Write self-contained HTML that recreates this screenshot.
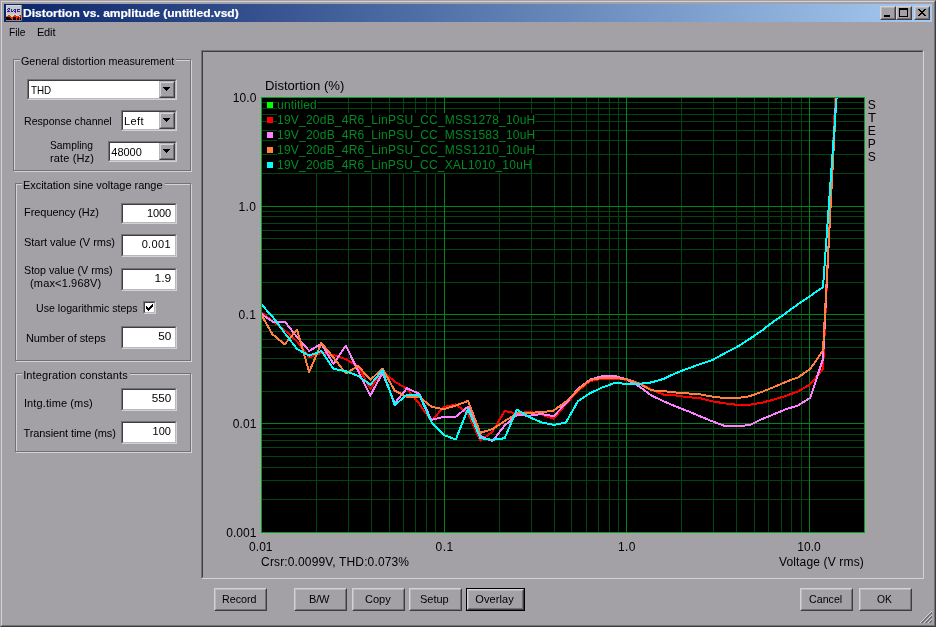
<!DOCTYPE html>
<html><head><meta charset="utf-8"><title>Distortion vs. amplitude</title><style>

html,body{margin:0;padding:0}
body{width:936px;height:627px;background:#a3a1a6;position:relative;overflow:hidden;font-family:"Liberation Sans",sans-serif;font-size:11px;color:#000}
div,span,svg{position:absolute}
.t{white-space:nowrap;display:block}
.sunk{box-sizing:border-box;border:1px solid;border-color:#737177 #d3d2d6 #d3d2d6 #737177;background:#fff}
.sunk2{left:0;top:0;right:0;bottom:0;box-sizing:border-box;border:1px solid;border-color:#3e3e40 #b9b7bc #b9b7bc #3e3e40}
.btn{box-sizing:border-box;border:1px solid;border-color:#d3d2d6 #3e3e40 #3e3e40 #d3d2d6;background:#a3a1a6}
.cbtn{box-sizing:border-box;border:1px solid;border-color:#b9b7bc #3e3e40 #3e3e40 #b9b7bc;background:#a3a1a6}
.cbtn2{left:0;top:0;right:0;bottom:0;box-sizing:border-box;border:1px solid;border-color:#d3d2d6 #737177 #737177 #d3d2d6}
.btn2{left:0;top:0;right:0;bottom:0;box-sizing:border-box;border:1px solid;border-color:#b9b7bc #737177 #737177 #b9b7bc}

</style></head><body>
<div style="left:0;top:0;width:936px;height:627px;box-sizing:border-box;border:1px solid;border-color:#a3a1a6 #3e3e40 #3e3e40 #a3a1a6"></div>
<div style="left:1px;top:1px;width:934px;height:625px;box-sizing:border-box;border:1px solid;border-color:#d3d2d6 #737177 #737177 #d3d2d6"></div>
<div style="left:4px;top:4px;width:928px;height:18px;background:linear-gradient(to right,#0a246a 0%,#a6caf0 100%)"></div>
<svg style="left:6px;top:5px" width="16" height="16" shape-rendering="crispEdges"><rect x="0" y="0" width="15" height="1" fill="#d8d8d4"/><rect x="15" y="0" width="1" height="1" fill="#8c8a84"/><rect x="0" y="1" width="1" height="1" fill="#d8d8d4"/><rect x="1" y="1" width="14" height="1" fill="#c6c6c6"/><rect x="15" y="1" width="1" height="1" fill="#8c8a84"/><rect x="0" y="2" width="1" height="1" fill="#d8d8d4"/><rect x="1" y="2" width="14" height="1" fill="#c6c6c6"/><rect x="15" y="2" width="1" height="1" fill="#8c8a84"/><rect x="0" y="3" width="1" height="1" fill="#d8d8d4"/><rect x="1" y="3" width="1" height="1" fill="#c6c6c6"/><rect x="2" y="3" width="2" height="1" fill="#26269c"/><rect x="4" y="3" width="11" height="1" fill="#c6c6c6"/><rect x="15" y="3" width="1" height="1" fill="#8c8a84"/><rect x="0" y="4" width="1" height="1" fill="#d8d8d4"/><rect x="1" y="4" width="1" height="1" fill="#26269c"/><rect x="2" y="4" width="1" height="1" fill="#c6c6c6"/><rect x="3" y="4" width="1" height="1" fill="#26269c"/><rect x="4" y="4" width="1" height="1" fill="#c6c6c6"/><rect x="5" y="4" width="1" height="1" fill="#26269c"/><rect x="6" y="4" width="2" height="1" fill="#c6c6c6"/><rect x="8" y="4" width="2" height="1" fill="#26269c"/><rect x="10" y="4" width="1" height="1" fill="#c6c6c6"/><rect x="11" y="4" width="3" height="1" fill="#26269c"/><rect x="14" y="4" width="1" height="1" fill="#c6c6c6"/><rect x="15" y="4" width="1" height="1" fill="#8c8a84"/><rect x="0" y="5" width="1" height="1" fill="#d8d8d4"/><rect x="1" y="5" width="1" height="1" fill="#c6c6c6"/><rect x="2" y="5" width="1" height="1" fill="#26269c"/><rect x="3" y="5" width="2" height="1" fill="#c6c6c6"/><rect x="5" y="5" width="1" height="1" fill="#26269c"/><rect x="6" y="5" width="1" height="1" fill="#c6c6c6"/><rect x="7" y="5" width="1" height="1" fill="#26269c"/><rect x="8" y="5" width="1" height="1" fill="#c6c6c6"/><rect x="9" y="5" width="1" height="1" fill="#26269c"/><rect x="10" y="5" width="1" height="1" fill="#c6c6c6"/><rect x="11" y="5" width="1" height="1" fill="#26269c"/><rect x="12" y="5" width="3" height="1" fill="#c6c6c6"/><rect x="15" y="5" width="1" height="1" fill="#8c8a84"/><rect x="0" y="6" width="1" height="1" fill="#d8d8d4"/><rect x="1" y="6" width="3" height="1" fill="#26269c"/><rect x="4" y="6" width="1" height="1" fill="#c6c6c6"/><rect x="5" y="6" width="2" height="1" fill="#26269c"/><rect x="7" y="6" width="1" height="1" fill="#c6c6c6"/><rect x="8" y="6" width="2" height="1" fill="#26269c"/><rect x="10" y="6" width="1" height="1" fill="#c6c6c6"/><rect x="11" y="6" width="3" height="1" fill="#26269c"/><rect x="14" y="6" width="1" height="1" fill="#c6c6c6"/><rect x="15" y="6" width="1" height="1" fill="#8c8a84"/><rect x="0" y="7" width="1" height="1" fill="#d8d8d4"/><rect x="1" y="7" width="8" height="1" fill="#c6c6c6"/><rect x="9" y="7" width="1" height="1" fill="#26269c"/><rect x="10" y="7" width="5" height="1" fill="#c6c6c6"/><rect x="15" y="7" width="1" height="1" fill="#8c8a84"/><rect x="0" y="8" width="1" height="1" fill="#d8d8d4"/><rect x="1" y="8" width="14" height="1" fill="#c6c6c6"/><rect x="15" y="8" width="1" height="1" fill="#8c8a84"/><rect x="0" y="9" width="1" height="1" fill="#d8d8d4"/><rect x="1" y="9" width="3" height="1" fill="#c4dce4"/><rect x="4" y="9" width="3" height="1" fill="#c6c6c6"/><rect x="7" y="9" width="4" height="1" fill="#c4dce4"/><rect x="11" y="9" width="3" height="1" fill="#c6c6c6"/><rect x="14" y="9" width="1" height="1" fill="#c4dce4"/><rect x="15" y="9" width="1" height="1" fill="#8c8a84"/><rect x="0" y="10" width="1" height="1" fill="#d8d8d4"/><rect x="1" y="10" width="1" height="1" fill="#c4dce4"/><rect x="2" y="10" width="2" height="1" fill="#ff2a00"/><rect x="4" y="10" width="4" height="1" fill="#c4dce4"/><rect x="8" y="10" width="2" height="1" fill="#ff2a00"/><rect x="10" y="10" width="3" height="1" fill="#c4dce4"/><rect x="13" y="10" width="2" height="1" fill="#ff2a00"/><rect x="15" y="10" width="1" height="1" fill="#8c8a84"/><rect x="0" y="11" width="1" height="1" fill="#ff7a30"/><rect x="1" y="11" width="4" height="1" fill="#ff2a00"/><rect x="5" y="11" width="2" height="1" fill="#c4dce4"/><rect x="7" y="11" width="6" height="1" fill="#ff2a00"/><rect x="13" y="11" width="1" height="1" fill="#c4dce4"/><rect x="14" y="11" width="1" height="1" fill="#ff2a00"/><rect x="15" y="11" width="1" height="1" fill="#8c8a84"/><rect x="0" y="12" width="4" height="1" fill="#000000"/><rect x="4" y="12" width="3" height="1" fill="#ff2a00"/><rect x="7" y="12" width="3" height="1" fill="#000000"/><rect x="10" y="12" width="2" height="1" fill="#ff2a00"/><rect x="12" y="12" width="1" height="1" fill="#000000"/><rect x="13" y="12" width="2" height="1" fill="#ff2a00"/><rect x="15" y="12" width="1" height="1" fill="#8c8a84"/><rect x="0" y="13" width="5" height="1" fill="#000000"/><rect x="5" y="13" width="2" height="1" fill="#ff2a00"/><rect x="7" y="13" width="3" height="1" fill="#000000"/><rect x="10" y="13" width="1" height="1" fill="#ff2a00"/><rect x="11" y="13" width="2" height="1" fill="#000000"/><rect x="13" y="13" width="1" height="1" fill="#ff2a00"/><rect x="14" y="13" width="1" height="1" fill="#000000"/><rect x="15" y="13" width="1" height="1" fill="#8c8a84"/><rect x="0" y="14" width="6" height="1" fill="#000000"/><rect x="6" y="14" width="1" height="1" fill="#ff2a00"/><rect x="7" y="14" width="3" height="1" fill="#000000"/><rect x="10" y="14" width="1" height="1" fill="#ff2a00"/><rect x="11" y="14" width="2" height="1" fill="#000000"/><rect x="13" y="14" width="1" height="1" fill="#ff2a00"/><rect x="14" y="14" width="1" height="1" fill="#000000"/><rect x="15" y="14" width="1" height="1" fill="#8c8a84"/><rect x="0" y="15" width="15" height="1" fill="#8c887c"/><rect x="15" y="15" width="1" height="1" fill="#706c64"/></svg>
<div class="btn" style="left:880px;top:6px;width:16px;height:14px"><div class="btn2"></div>
<svg width="12" height="10" style="left:1px;top:1px" shape-rendering="crispEdges"><rect x="2" y="7" width="6" height="2" fill="#000"/></svg>
</div>
<div class="btn" style="left:896px;top:6px;width:16px;height:14px"><div class="btn2"></div>
<svg width="12" height="10" style="left:1px;top:1px" shape-rendering="crispEdges"><path d="M1 0h9v9h-9zM2 2v6h7v-6z" fill="#000" fill-rule="evenodd"/></svg>
</div>
<div class="btn" style="left:914px;top:6px;width:16px;height:14px"><div class="btn2"></div>
<svg width="12" height="10" style="left:1px;top:1px" shape-rendering="crispEdges"><path d="M2 1h2v1h-2zM8 1h2v1h-2zM3 2h2v1h-2zM7 2h2v1h-2zM4 3h4v1h-4zM5 4h2v1h-2zM4 5h4v1h-4zM3 6h2v1h-2zM7 6h2v1h-2zM2 7h2v1h-2zM8 7h2v1h-2z" fill="#000"/></svg>
</div>
<div style="left:201px;top:50px;width:723px;height:529px;box-sizing:border-box;border:1px solid;border-color:#737177 #d3d2d6 #d3d2d6 #737177"></div>
<div style="left:202px;top:51px;width:721px;height:527px;box-sizing:border-box;border:1px solid;border-color:#3e3e40 #a3a1a6 #a3a1a6 #3e3e40"></div>
<div style="position:absolute;left:14px;top:60px;width:178px;height:112px;border:1px solid #d3d2d6;box-sizing:border-box"></div><div style="position:absolute;left:13px;top:59px;width:178px;height:112px;border:1px solid #737177;box-sizing:border-box"></div><div style="position:absolute;left:20px;top:58px;width:156px;height:4px;background:#a3a1a6"></div>
<div style="position:absolute;left:16px;top:184px;width:176px;height:178px;border:1px solid #d3d2d6;box-sizing:border-box"></div><div style="position:absolute;left:15px;top:183px;width:176px;height:178px;border:1px solid #737177;box-sizing:border-box"></div><div style="position:absolute;left:22px;top:182px;width:143px;height:4px;background:#a3a1a6"></div>
<div style="position:absolute;left:16px;top:374px;width:176px;height:79px;border:1px solid #d3d2d6;box-sizing:border-box"></div><div style="position:absolute;left:15px;top:373px;width:176px;height:79px;border:1px solid #737177;box-sizing:border-box"></div><div style="position:absolute;left:22px;top:372px;width:108px;height:4px;background:#a3a1a6"></div>
<div class="sunk" style="left:27px;top:79px;width:150px;height:21px"><div class="sunk2"></div><div class="cbtn" style="left:131px;top:1px;width:16px;height:17px"><div class="cbtn2"></div><svg width="7" height="4" style="position:absolute;left:3px;top:5px" shape-rendering="crispEdges"><path d="M0 0h7v1h-7zM1 1h5v1h-5zM2 2h3v1h-3zM3 3h1v1h-1z" fill="#000"/></svg></div></div>
<div class="sunk" style="left:121px;top:110px;width:56px;height:21px"><div class="sunk2"></div><div class="cbtn" style="left:37px;top:1px;width:16px;height:17px"><div class="cbtn2"></div><svg width="7" height="4" style="position:absolute;left:3px;top:5px" shape-rendering="crispEdges"><path d="M0 0h7v1h-7zM1 1h5v1h-5zM2 2h3v1h-3zM3 3h1v1h-1z" fill="#000"/></svg></div></div>
<div class="sunk" style="left:108px;top:141px;width:69px;height:21px"><div class="sunk2"></div><div class="cbtn" style="left:50px;top:1px;width:16px;height:17px"><div class="cbtn2"></div><svg width="7" height="4" style="position:absolute;left:3px;top:5px" shape-rendering="crispEdges"><path d="M0 0h7v1h-7zM1 1h5v1h-5zM2 2h3v1h-3zM3 3h1v1h-1z" fill="#000"/></svg></div></div>
<div class="sunk" style="left:121px;top:203px;width:56px;height:21px"><div class="sunk2"></div></div>
<div class="sunk" style="left:121px;top:234px;width:56px;height:23px"><div class="sunk2"></div></div>
<div class="sunk" style="left:121px;top:268px;width:56px;height:23px"><div class="sunk2"></div></div>
<div class="sunk" style="left:121px;top:326px;width:56px;height:23px"><div class="sunk2"></div></div>
<div class="sunk" style="left:121px;top:388px;width:56px;height:23px"><div class="sunk2"></div></div>
<div class="sunk" style="left:121px;top:421px;width:56px;height:23px"><div class="sunk2"></div></div>
<div class="sunk" style="left:143px;top:301px;width:13px;height:13px"><div class="sunk2"></div><svg width="7" height="7" style="left:2px;top:2px" shape-rendering="crispEdges"><path d="M0 2h1v3h-1zM1 3h1v3h-1zM2 4h1v3h-1zM3 3h1v3h-1zM4 2h1v3h-1zM5 1h1v3h-1zM6 0h1v3h-1z" fill="#000"/></svg></div>
<div class="btn" style="left:214px;top:588px;width:53px;height:23px"><div class="btn2"></div></div>
<div class="btn" style="left:294px;top:588px;width:53px;height:23px"><div class="btn2"></div></div>
<div class="btn" style="left:352px;top:588px;width:53px;height:23px"><div class="btn2"></div></div>
<div class="btn" style="left:409px;top:588px;width:53px;height:23px"><div class="btn2"></div></div>
<div style="position:absolute;left:466px;top:588px;width:59px;height:23px;background:#000"></div><div class="btn" style="left:467px;top:589px;width:57px;height:21px"><div class="btn2"></div></div>
<div class="btn" style="left:800px;top:588px;width:53px;height:23px"><div class="btn2"></div></div>
<div class="btn" style="left:859px;top:588px;width:53px;height:23px"><div class="btn2"></div></div>
<svg style="left:919px;top:610px" width="13" height="13"><g stroke-width="1"><line x1="1" y1="13" x2="13" y2="1" stroke="#d3d2d6"/><line x1="2" y1="13" x2="13" y2="2" stroke="#737177"/><line x1="3" y1="13" x2="13" y2="3" stroke="#737177"/><line x1="5" y1="13" x2="13" y2="5" stroke="#d3d2d6"/><line x1="6" y1="13" x2="13" y2="6" stroke="#737177"/><line x1="7" y1="13" x2="13" y2="7" stroke="#737177"/><line x1="9" y1="13" x2="13" y2="9" stroke="#d3d2d6"/><line x1="10" y1="13" x2="13" y2="10" stroke="#737177"/><line x1="11" y1="13" x2="13" y2="11" stroke="#737177"/></g></svg>
<svg id="plot" width="604" height="436" viewBox="261 97 604 436" shape-rendering="crispEdges" style="position:absolute;left:261px;top:97px">
<rect x="261" y="97" width="604" height="436" fill="#000"/>
<rect x="316" y="97" width="1" height="436" fill="#004611"/>
<rect x="348" y="97" width="1" height="436" fill="#004611"/>
<rect x="371" y="97" width="1" height="436" fill="#004611"/>
<rect x="389" y="97" width="1" height="436" fill="#004611"/>
<rect x="403" y="97" width="1" height="436" fill="#004611"/>
<rect x="415" y="97" width="1" height="436" fill="#004611"/>
<rect x="426" y="97" width="1" height="436" fill="#004611"/>
<rect x="435" y="97" width="1" height="436" fill="#004611"/>
<rect x="499" y="97" width="1" height="436" fill="#004611"/>
<rect x="531" y="97" width="1" height="436" fill="#004611"/>
<rect x="554" y="97" width="1" height="436" fill="#004611"/>
<rect x="571" y="97" width="1" height="436" fill="#004611"/>
<rect x="586" y="97" width="1" height="436" fill="#004611"/>
<rect x="598" y="97" width="1" height="436" fill="#004611"/>
<rect x="609" y="97" width="1" height="436" fill="#004611"/>
<rect x="618" y="97" width="1" height="436" fill="#004611"/>
<rect x="681" y="97" width="1" height="436" fill="#004611"/>
<rect x="713" y="97" width="1" height="436" fill="#004611"/>
<rect x="736" y="97" width="1" height="436" fill="#004611"/>
<rect x="754" y="97" width="1" height="436" fill="#004611"/>
<rect x="768" y="97" width="1" height="436" fill="#004611"/>
<rect x="781" y="97" width="1" height="436" fill="#004611"/>
<rect x="791" y="97" width="1" height="436" fill="#004611"/>
<rect x="801" y="97" width="1" height="436" fill="#004611"/>
<rect x="261" y="499" width="604" height="1" fill="#004611"/>
<rect x="261" y="480" width="604" height="1" fill="#004611"/>
<rect x="261" y="467" width="604" height="1" fill="#004611"/>
<rect x="261" y="456" width="604" height="1" fill="#004611"/>
<rect x="261" y="447" width="604" height="1" fill="#004611"/>
<rect x="261" y="440" width="604" height="1" fill="#004611"/>
<rect x="261" y="434" width="604" height="1" fill="#004611"/>
<rect x="261" y="428" width="604" height="1" fill="#004611"/>
<rect x="261" y="391" width="604" height="1" fill="#004611"/>
<rect x="261" y="371" width="604" height="1" fill="#004611"/>
<rect x="261" y="358" width="604" height="1" fill="#004611"/>
<rect x="261" y="347" width="604" height="1" fill="#004611"/>
<rect x="261" y="339" width="604" height="1" fill="#004611"/>
<rect x="261" y="331" width="604" height="1" fill="#004611"/>
<rect x="261" y="325" width="604" height="1" fill="#004611"/>
<rect x="261" y="319" width="604" height="1" fill="#004611"/>
<rect x="261" y="282" width="604" height="1" fill="#004611"/>
<rect x="261" y="263" width="604" height="1" fill="#004611"/>
<rect x="261" y="249" width="604" height="1" fill="#004611"/>
<rect x="261" y="238" width="604" height="1" fill="#004611"/>
<rect x="261" y="230" width="604" height="1" fill="#004611"/>
<rect x="261" y="223" width="604" height="1" fill="#004611"/>
<rect x="261" y="216" width="604" height="1" fill="#004611"/>
<rect x="261" y="211" width="604" height="1" fill="#004611"/>
<rect x="261" y="173" width="604" height="1" fill="#004611"/>
<rect x="261" y="154" width="604" height="1" fill="#004611"/>
<rect x="261" y="140" width="604" height="1" fill="#004611"/>
<rect x="261" y="130" width="604" height="1" fill="#004611"/>
<rect x="261" y="121" width="604" height="1" fill="#004611"/>
<rect x="261" y="114" width="604" height="1" fill="#004611"/>
<rect x="261" y="108" width="604" height="1" fill="#004611"/>
<rect x="261" y="102" width="604" height="1" fill="#004611"/>
<rect x="444" y="97" width="1" height="436" fill="#00841c"/>
<rect x="626" y="97" width="1" height="436" fill="#00841c"/>
<rect x="809" y="97" width="1" height="436" fill="#00841c"/>
<rect x="261" y="206" width="604" height="1" fill="#00841c"/>
<rect x="261" y="314" width="604" height="1" fill="#00841c"/>
<rect x="261" y="423" width="604" height="1" fill="#00841c"/>
<rect x="277" y="98" width="40" height="15" fill="#000"/>
<rect x="267" y="102" width="6" height="6" fill="#00ff00"/>
<rect x="277" y="113" width="258" height="15" fill="#000"/>
<rect x="267" y="117" width="6" height="6" fill="#ff0000"/>
<rect x="277" y="128" width="258" height="15" fill="#000"/>
<rect x="267" y="132" width="6" height="6" fill="#ff80ff"/>
<rect x="277" y="143" width="258" height="15" fill="#000"/>
<rect x="267" y="147" width="6" height="6" fill="#ff8040"/>
<rect x="277" y="158" width="254" height="15" fill="#000"/>
<rect x="267" y="162" width="6" height="6" fill="#00ffff"/>
<g>
<polyline points="260.3,311.2 272.5,321.1 284.7,330.3 297.0,341.4 309.2,357.3 321.4,352.9 333.6,355.0 345.8,359.2 358.1,366.5 370.3,388.6 382.5,371.1 394.7,381.7 406.9,388.8 419.2,403.7 431.4,421.2 443.6,407.0 455.8,404.4 468.0,413.6 480.3,440.8 492.5,431.6 504.7,411.0 516.9,413.6 529.1,411.8 541.4,414.4 553.6,418.8 565.8,404.3 578.0,391.0 590.2,381.0 602.5,378.5 614.7,378.5 626.9,379.8 639.1,383.0 651.3,389.6 663.6,394.6 675.8,395.4 688.0,397.2 700.2,398.2 712.4,401.4 724.7,403.3 736.9,404.8 749.1,404.8 761.3,402.9 773.5,399.7 785.8,395.9 798.0,391.5 810.2,384.4 823.0,369.1 837.0,60.0" fill="none" stroke="#ff0000" stroke-width="2" stroke-linejoin="round"/>
<polyline points="260.3,313.2 272.5,321.5 284.7,321.5 297.0,337.0 309.2,350.9 321.4,343.7 333.6,364.1 345.8,345.5 358.1,370.9 370.3,395.6 382.5,372.9 394.7,403.2 406.9,388.3 419.2,393.7 431.4,420.0 443.6,416.9 455.8,416.7 468.0,406.6 480.3,436.0 492.5,441.1 504.7,425.5 516.9,414.9 529.1,415.8 541.4,414.0 553.6,416.2 565.8,403.4 578.0,388.9 590.2,379.5 602.5,376.0 614.7,376.0 626.9,379.5 639.1,386.3 651.3,395.5 663.6,401.2 675.8,406.5 688.0,411.2 700.2,416.3 712.4,421.4 724.7,425.9 736.9,425.9 749.1,425.3 761.3,419.5 773.5,414.4 785.8,409.3 798.0,405.5 810.2,397.8 823.0,359.0 837.9,60.0" fill="none" stroke="#ff80ff" stroke-width="2" stroke-linejoin="round"/>
<polyline points="260.3,313.2 272.5,334.3 284.7,344.3 297.0,329.7 309.2,372.0 321.4,342.9 333.6,357.7 345.8,373.5 358.1,366.0 370.3,379.8 382.5,368.7 394.7,390.6 406.9,396.9 419.2,396.9 431.4,406.7 443.6,409.2 455.8,405.5 468.0,400.9 480.3,432.9 492.5,429.0 504.7,421.1 516.9,413.4 529.1,412.8 541.4,412.2 553.6,410.6 565.8,401.7 578.0,389.7 590.2,379.9 602.5,378.0 614.7,378.0 626.9,379.2 639.1,383.5 651.3,390.3 663.6,391.1 675.8,392.5 688.0,393.4 700.2,394.4 712.4,396.6 724.7,398.1 736.9,398.1 749.1,396.4 761.3,392.1 773.5,387.2 785.8,381.9 798.0,377.4 810.2,369.1 823.0,350.6 838.3,60.0" fill="none" stroke="#ff8040" stroke-width="2" stroke-linejoin="round"/>
<polyline points="260.3,303.2 272.5,316.7 284.7,333.1 297.0,348.9 309.2,355.7 321.4,350.9 333.6,368.9 345.8,371.2 358.1,375.9 370.3,384.7 382.5,370.3 394.7,405.0 406.9,394.8 419.2,394.8 431.4,422.0 443.6,434.9 455.8,439.5 468.0,408.8 480.3,438.0 492.5,439.9 504.7,438.2 516.9,409.5 529.1,417.0 541.4,422.3 553.6,424.9 565.8,422.7 578.0,401.1 590.2,393.1 602.5,387.4 614.7,383.0 626.9,383.8 639.1,383.9 651.3,382.4 663.6,378.9 675.8,373.1 688.0,368.5 700.2,364.0 712.4,360.0 724.7,353.3 736.9,347.0 749.1,339.3 761.3,331.0 773.5,321.5 785.8,313.2 798.0,304.2 810.2,296.0 823.0,287.0 839.3,60.0" fill="none" stroke="#00ffff" stroke-width="2" stroke-linejoin="round"/>
</g>
<rect x="261" y="97" width="604" height="1" fill="#00a020"/>
<rect x="261" y="532" width="604" height="1" fill="#00a020"/>
<rect x="261" y="97" width="1" height="436" fill="#00a020"/>
<rect x="864" y="97" width="1" height="436" fill="#00a020"/>
</svg>
<div id="txt" style="left:0;top:0;width:936px;height:627px;will-change:transform">
<span class="t" style="left:22.74px;top:7px;font-size:11px;line-height:13px;letter-spacing:0.000px;transform:scaleX(1.0927);transform-origin:left center;font-weight:bold;color:#fff;-webkit-text-stroke:0.2px #fff">Distortion vs. amplitude (untitled.vsd)</span>
<span class="t" style="left:9.35px;top:26px;font-size:11px;line-height:13px;letter-spacing:0.000px;transform:scaleX(0.9304);transform-origin:left center;">File</span>
<span class="t" style="left:36.90px;top:26px;font-size:11px;line-height:13px;letter-spacing:-0.123px;">Edit</span>
<span class="t" style="left:21.32px;top:55px;font-size:11px;line-height:13px;letter-spacing:0.000px;transform:scaleX(0.9749);transform-origin:left center;">General distortion measurement</span>
<span class="t" style="left:30.57px;top:84px;font-size:11px;line-height:13px;letter-spacing:0.000px;transform:scaleX(0.8934);transform-origin:left center;">THD</span>
<span class="t" style="left:24.03px;top:115px;font-size:11px;line-height:13px;letter-spacing:0.000px;transform:scaleX(0.9624);transform-origin:left center;">Response channel</span>
<span class="t" style="left:124.10px;top:115px;font-size:11px;line-height:13px;letter-spacing:0.347px;">Left</span>
<span class="t" style="left:50.05px;top:139px;font-size:11px;line-height:13px;letter-spacing:0.000px;transform:scaleX(0.9355);transform-origin:left center;">Sampling</span>
<span class="t" style="left:50.00px;top:152px;font-size:11px;line-height:13px;letter-spacing:0.127px;">rate (Hz)</span>
<span class="t" style="left:111.30px;top:146px;font-size:11px;line-height:13px;letter-spacing:-0.023px;">48000</span>
<span class="t" style="left:23.00px;top:179px;font-size:11px;line-height:13px;letter-spacing:-0.041px;">Excitation sine voltage range</span>
<span class="t" style="left:24.10px;top:206px;font-size:11px;line-height:13px;letter-spacing:-0.084px;">Frequency (Hz)</span>
<span class="t" style="right:765.00px;top:207px;font-size:11px;line-height:13px;letter-spacing:-0.128px;">1000</span>
<span class="t" style="left:24.00px;top:236px;font-size:11px;line-height:13px;letter-spacing:-0.038px;">Start value (V rms)</span>
<span class="t" style="right:765.00px;top:238px;font-size:11px;line-height:13px;letter-spacing:0.367px;">0.001</span>
<span class="t" style="left:24.02px;top:264px;font-size:11px;line-height:13px;letter-spacing:0.000px;transform:scaleX(0.9726);transform-origin:left center;">Stop value (V rms)</span>
<span class="t" style="left:30.00px;top:277px;font-size:11px;line-height:13px;letter-spacing:0.154px;">(max&lt;1.968V)</span>
<span class="t" style="right:764.95px;top:272px;font-size:11px;line-height:13px;letter-spacing:0.000px;transform:scaleX(1.0917);transform-origin:right center;">1.9</span>
<span class="t" style="left:35.92px;top:302px;font-size:11px;line-height:13px;letter-spacing:0.000px;transform:scaleX(0.9662);transform-origin:left center;">Use logarithmic steps</span>
<span class="t" style="left:25.90px;top:332px;font-size:11px;line-height:13px;letter-spacing:-0.065px;">Number of steps</span>
<span class="t" style="right:764.97px;top:330px;font-size:11px;line-height:13px;letter-spacing:0.000px;transform:scaleX(1.0694);transform-origin:right center;">50</span>
<span class="t" style="left:23.20px;top:369px;font-size:11px;line-height:13px;letter-spacing:0.119px;">Integration constants</span>
<span class="t" style="left:23.90px;top:397px;font-size:11px;line-height:13px;letter-spacing:0.120px;">Intg.time (ms)</span>
<span class="t" style="right:764.97px;top:392px;font-size:11px;line-height:13px;letter-spacing:0.000px;transform:scaleX(1.0621);transform-origin:right center;">550</span>
<span class="t" style="left:23.50px;top:427px;font-size:11px;line-height:13px;letter-spacing:-0.107px;">Transient time (ms)</span>
<span class="t" style="right:765.00px;top:425px;font-size:11px;line-height:13px;letter-spacing:0.020px;">100</span>
<span class="t" style="left:264.84px;top:79px;font-size:12px;line-height:14px;letter-spacing:0.000px;transform:scaleX(1.0923);transform-origin:left center;">Distortion (%)</span>
<span class="t" style="right:679.50px;top:91px;font-size:12px;line-height:14px;letter-spacing:0.080px;">10.0</span>
<span class="t" style="right:679.50px;top:200px;font-size:12px;line-height:14px;letter-spacing:0.456px;">1.0</span>
<span class="t" style="right:679.50px;top:308px;font-size:12px;line-height:14px;letter-spacing:0.456px;">0.1</span>
<span class="t" style="right:679.50px;top:417px;font-size:12px;line-height:14px;letter-spacing:0.080px;">0.01</span>
<span class="t" style="right:679.50px;top:526px;font-size:12px;line-height:14px;letter-spacing:0.042px;">0.001</span>
<span class="t" style="left:249.10px;top:540px;font-size:12px;line-height:14px;letter-spacing:0.014px;">0.01</span>
<span class="t" style="left:435.50px;top:540px;font-size:12px;line-height:14px;letter-spacing:0.456px;">0.1</span>
<span class="t" style="left:617.90px;top:540px;font-size:12px;line-height:14px;letter-spacing:0.406px;">1.0</span>
<span class="t" style="left:797.30px;top:540px;font-size:12px;line-height:14px;letter-spacing:0.014px;">10.0</span>
<span class="t" style="left:261.10px;top:555px;font-size:12px;line-height:14px;letter-spacing:0.137px;">Crsr:0.0099V, THD:0.073%</span>
<span class="t" style="right:72.00px;top:555px;font-size:12px;line-height:14px;letter-spacing:0.157px;">Voltage (V rms)</span>
<span class="t" style="left:867.80px;top:98px;font-size:12px;line-height:14px;letter-spacing:0.284px;">S</span>
<span class="t" style="left:867.93px;top:111px;font-size:12px;line-height:14px;letter-spacing:0.000px;transform:scaleX(1.1030);transform-origin:left center;">T</span>
<span class="t" style="left:867.80px;top:124px;font-size:12px;line-height:14px;letter-spacing:0.284px;">E</span>
<span class="t" style="left:867.80px;top:137px;font-size:12px;line-height:14px;letter-spacing:0.284px;">P</span>
<span class="t" style="left:867.80px;top:150px;font-size:12px;line-height:14px;letter-spacing:0.284px;">S</span>
<span class="t" style="left:277.10px;top:98px;font-size:12px;line-height:14px;letter-spacing:0.142px;color:#008c22">untitled</span>
<span class="t" style="left:277.10px;top:113px;font-size:12px;line-height:14px;letter-spacing:0.216px;color:#008c22">19V_20dB_4R6_LinPSU_CC_MSS1278_10uH</span>
<span class="t" style="left:277.10px;top:128px;font-size:12px;line-height:14px;letter-spacing:0.216px;color:#008c22">19V_20dB_4R6_LinPSU_CC_MSS1583_10uH</span>
<span class="t" style="left:277.10px;top:143px;font-size:12px;line-height:14px;letter-spacing:0.216px;color:#008c22">19V_20dB_4R6_LinPSU_CC_MSS1210_10uH</span>
<span class="t" style="left:277.10px;top:158px;font-size:12px;line-height:14px;letter-spacing:0.208px;color:#008c22">19V_20dB_4R6_LinPSU_CC_XAL1010_10uH</span>
<span class="t" style="left:222.12px;top:593px;font-size:11px;line-height:13px;letter-spacing:0.000px;transform:scaleX(0.9727);transform-origin:left center;">Record</span>
<span class="t" style="left:309.10px;top:593px;font-size:11px;line-height:13px;letter-spacing:-0.191px;">B/W</span>
<span class="t" style="left:365.10px;top:593px;font-size:11px;line-height:13px;letter-spacing:-0.029px;">Copy</span>
<span class="t" style="left:420.10px;top:593px;font-size:11px;line-height:13px;letter-spacing:-0.062px;">Setup</span>
<span class="t" style="left:475.30px;top:593px;font-size:11px;line-height:13px;letter-spacing:0.082px;">Overlay</span>
<span class="t" style="left:809.02px;top:593px;font-size:11px;line-height:13px;letter-spacing:0.000px;transform:scaleX(0.9693);transform-origin:left center;">Cancel</span>
<span class="t" style="left:877.14px;top:593px;font-size:11px;line-height:13px;letter-spacing:0.000px;transform:scaleX(0.9367);transform-origin:left center;">OK</span>
</div>
</body></html>
